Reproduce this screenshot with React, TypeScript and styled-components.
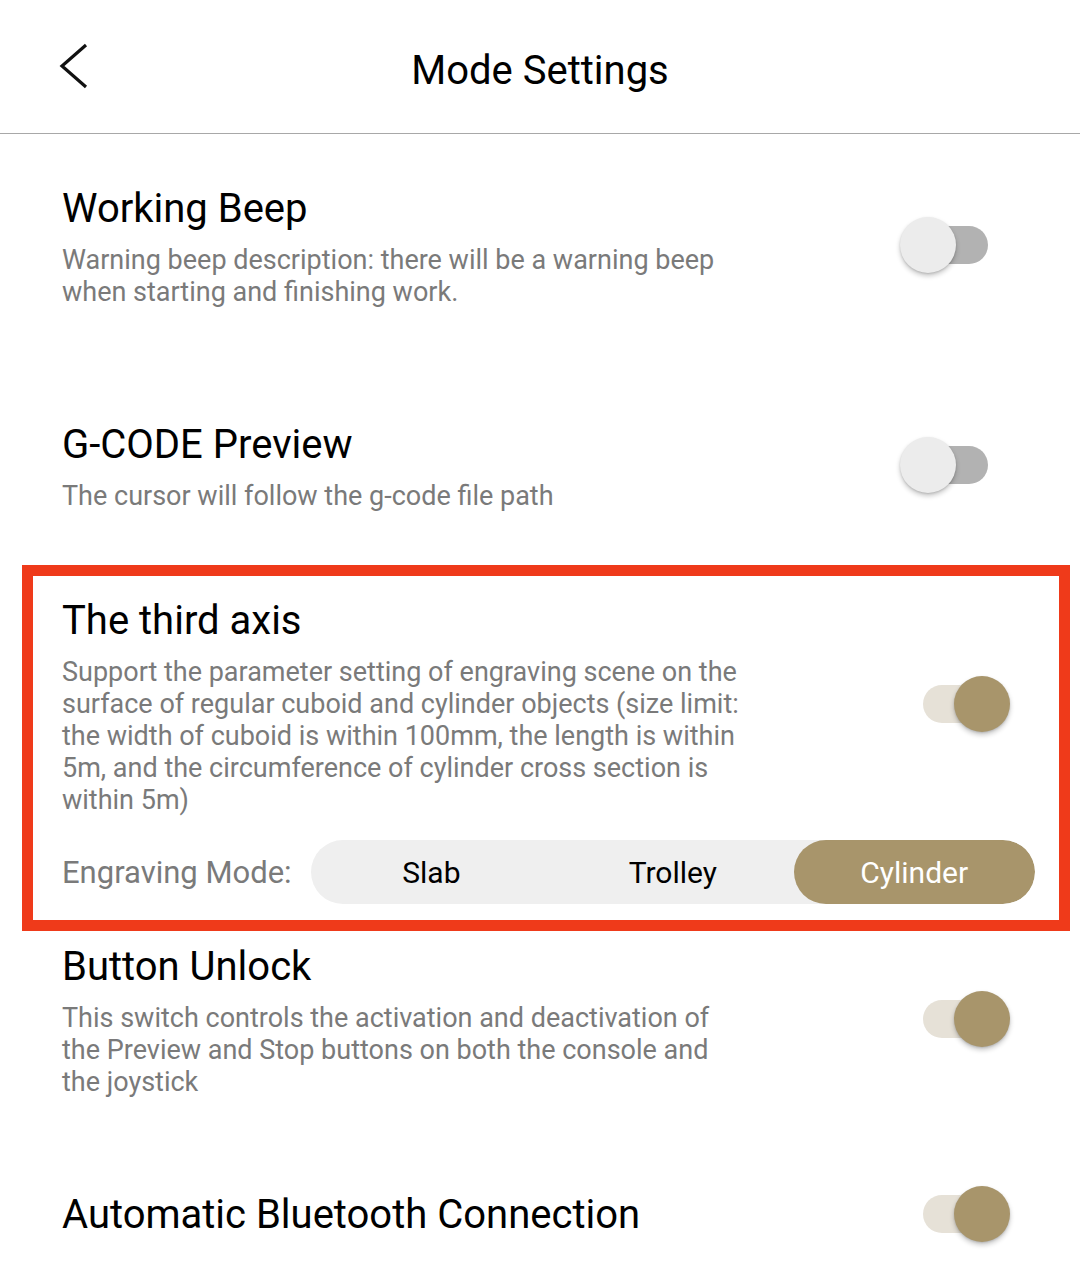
import React from "react";
import styled, { createGlobalStyle } from "styled-components";

const Global = createGlobalStyle`
  html, body { margin: 0; padding: 0; background: #ffffff; }
  body { font-family: Roboto, "Noto Sans", "Liberation Sans", sans-serif; color: #111; }
  * { box-sizing: border-box; }
`;

const Page = styled.div`
  width: 1080px;
  min-height: 1275px;
  background: #fff;
`;

const Header = styled.header`
  height: 134px;
  border-bottom: 1px solid #a8a8a8;
  display: grid;
  grid-template-columns: 1fr auto 1fr;
  align-items: center;
  padding-top: 4px;
`;

const BackButton = styled.button`
  justify-self: start;
  margin-left: 58px;
  margin-top: -6px;
  background: none;
  border: 0;
  padding: 0;
  width: 32px;
  height: 46px;
  display: flex;
  align-items: center;
  justify-content: center;
`;

const HeaderTitle = styled.h1`
  margin: 4px 0 0;
  font-size: 40px;
  font-weight: 400;
  color: #000;
  line-height: 46px;
`;

const Item = styled.section<{ $top: number }>`
  display: flex;
  align-items: center;
  justify-content: space-between;
  padding: ${(p) => p.$top}px 70px 0 62px;
`;

const TextCol = styled.div`
  flex: 1;
  min-width: 0;
`;

const Title = styled.div`
  font-size: 40px;
  line-height: 46px;
  color: #000;
  white-space: nowrap;
`;

const Desc = styled.div`
  margin-top: 12px;
  font-size: 27px;
  line-height: 32px;
  color: #7a7a7a;
  white-space: nowrap;
`;

const Highlight = styled.div`
  margin: 53px 10px 0 22px;
  border: 11px solid #ef3a1a;
  padding: 22px 24px 16px 29px;
`;

const HighlightRow = styled.div`
  display: flex;
  align-items: center;
  justify-content: space-between;
`;

const SwitchWrap = styled.div<{ $shift: number; $lift: number }>`
  position: relative;
  flex: none;
  width: 110px;
  height: 56px;
  margin-right: ${(p) => p.$shift}px;
  margin-top: ${(p) => -p.$lift}px;
`;

const Track = styled.div<{ $on: boolean }>`
  position: absolute;
  top: 9px;
  left: ${(p) => (p.$on ? 23 : 5)}px;
  width: 83px;
  height: 38px;
  border-radius: 19px;
  background: ${(p) => (p.$on ? "#e6e1d7" : "#b2b2b2")};
`;

const Knob = styled.div<{ $on: boolean }>`
  position: absolute;
  top: 0;
  left: ${(p) => (p.$on ? 54 : 0)}px;
  width: 56px;
  height: 56px;
  border-radius: 50%;
  background: ${(p) => (p.$on ? "#a8956b" : "#ececec")};
  box-shadow: 0 3px 5px rgba(0, 0, 0, 0.22), 0 1px 2px rgba(0, 0, 0, 0.12);
`;

const ModeRow = styled.div`
  display: flex;
  align-items: center;
  gap: 19px;
  margin-top: 24px;
`;

const ModeLabel = styled.span`
  font-size: 31px;
  color: #7a7a7a;
  white-space: nowrap;
`;

const Segments = styled.div`
  flex: 1;
  height: 64px;
  border-radius: 32px;
  background: #efefef;
  display: grid;
  grid-template-columns: repeat(3, 1fr);
  overflow: hidden;
`;

const Segment = styled.div<{ $active: boolean }>`
  display: flex;
  align-items: center;
  justify-content: center;
  font-size: 30px;
  border-radius: 32px;
  color: ${(p) => (p.$active ? "#ffffff" : "#000")};
  background: ${(p) => (p.$active ? "#a8956b" : "transparent")};
`;

function Switch({ on, shift = 0, lift = 3 }: { on: boolean; shift?: number; lift?: number }) {
  return (
    <SwitchWrap $shift={shift} $lift={lift}>
      <Track $on={on} />
      <Knob $on={on} />
    </SwitchWrap>
  );
}

function Lines({ lines }: { lines: string[] }) {
  return (
    <Desc>
      {lines.map((l, i) => (
        <React.Fragment key={i}>
          {l}
          {i < lines.length - 1 && <br />}
        </React.Fragment>
      ))}
    </Desc>
  );
}

export default function App() {
  return (
    <Page>
      <Global />
      <Header>
        <BackButton aria-label="Back">
          <svg width="32" height="46" viewBox="0 0 32 46" fill="none">
            <path d="M28 2 L4 23 L28 44" stroke="#111" strokeWidth="3.2" strokeLinecap="butt" strokeLinejoin="miter" />
          </svg>
        </BackButton>
        <HeaderTitle>Mode Settings</HeaderTitle>
        <div />
      </Header>

      <Item $top={52}>
        <TextCol>
          <Title>Working Beep</Title>
          <Lines
            lines={[
              "Warning beep description: there will be a warning beep",
              "when starting and finishing work.",
            ]}
          />
        </TextCol>
        <Switch on={false} lift={5} />
      </Item>

      <Item $top={114}>
        <TextCol>
          <Title>G-CODE Preview</Title>
          <Lines lines={["The cursor will follow the g-code file path"]} />
        </TextCol>
        <Switch on={false} lift={5} />
      </Item>

      <Highlight>
        <HighlightRow>
          <TextCol>
            <Title>The third axis</Title>
            <Lines
              lines={[
                "Support the parameter setting of engraving scene on the",
                "surface of regular cuboid and cylinder objects (size limit:",
                "the width of cuboid is within 100mm, the length is within",
                "5m, and the circumference of cylinder cross section is",
                "within 5m)",
              ]}
            />
          </TextCol>
          <Switch on shift={25} lift={6} />
        </HighlightRow>
        <ModeRow>
          <ModeLabel>Engraving Mode:</ModeLabel>
          <Segments>
            <Segment $active={false}>Slab</Segment>
            <Segment $active={false}>Trolley</Segment>
            <Segment $active>Cylinder</Segment>
          </Segments>
        </ModeRow>
      </Highlight>

      <Item $top={13}>
        <TextCol>
          <Title>Button Unlock</Title>
          <Lines
            lines={[
              "This switch controls the activation and deactivation of",
              "the Preview and Stop buttons on both the console and",
              "the joystick",
            ]}
          />
        </TextCol>
        <Switch on lift={4} />
      </Item>

      <Item $top={90}>
        <TextCol>
          <Title>Automatic Bluetooth Connection</Title>
        </TextCol>
        <Switch on lift={2} />
      </Item>
    </Page>
  );
}
